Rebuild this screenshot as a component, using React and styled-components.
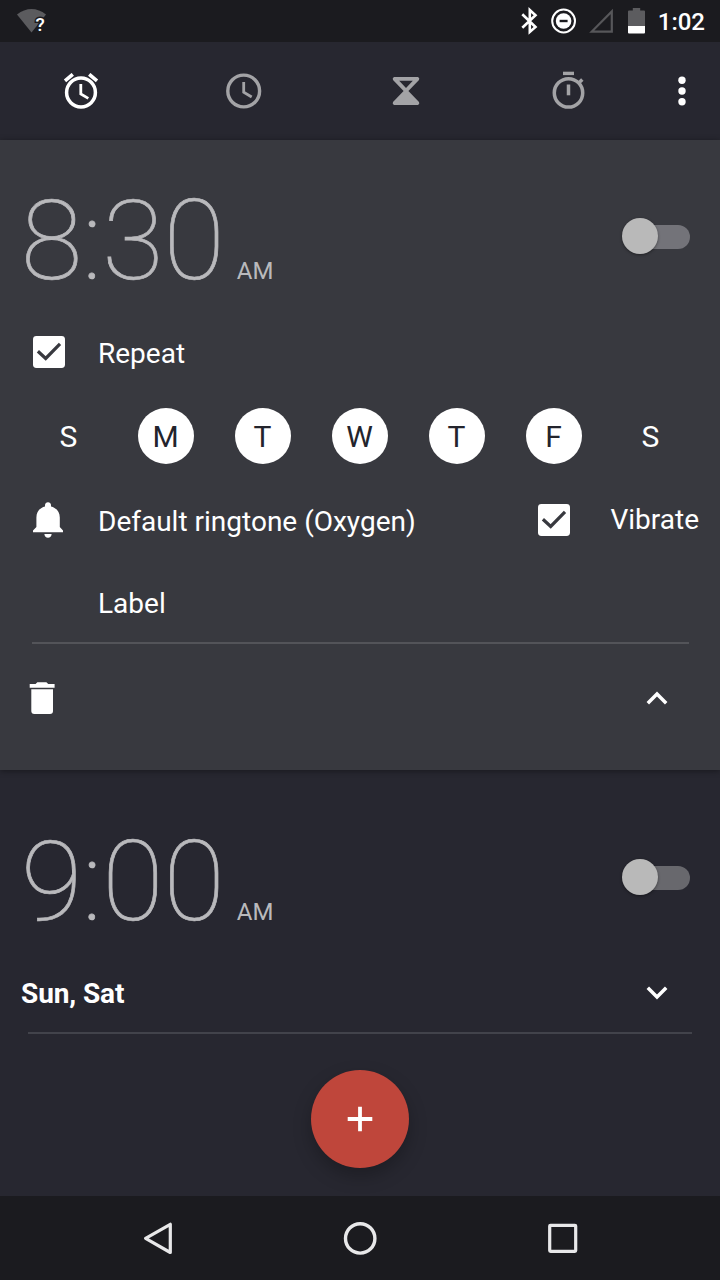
import React from 'react'
import styled, { createGlobalStyle, ThemeProvider } from 'styled-components'

const theme = {
  colors: {
    bar: '#1b1b1f',
    background: '#272730',
    expanded: '#38393f',
    time: '#b9b9bc',
    inactive: '#a3a3a6',
    accent: '#bf463b',
    dark: '#23242c'
  }
}

const GlobalStyle = createGlobalStyle`
  *,
  *::before,
  *::after {
    box-sizing: border-box;
  }

  body {
    margin: 0;
    font-family: Roboto, sans-serif;
    background-color: #272730;
    color: #fff;
  }

  svg {
    display: block;
    flex: none;
  }

  button {
    border: 0;
    padding: 0;
    background: none;
    color: inherit;
    font: inherit;
  }
`

const Screen = styled.div`
  width: 720px;
  height: 1280px;
  display: flex;
  flex-direction: column;
  overflow: hidden;
  background-color: ${props => props.theme.colors.background};
`

const StatusBar = styled.header`
  height: 42px;
  flex: none;
  padding: 0 15px 0 16px;
  display: flex;
  align-items: center;
  justify-content: space-between;
  background-color: ${props => props.theme.colors.bar};
`

const StatusIcons = styled.div`
  display: flex;
  align-items: center;
`

const Clock = styled.span`
  margin-left: 13px;
  font-size: 24px;
  line-height: 42px;
  font-weight: 500;
  padding-top: 1px;
`

const Toolbar = styled.nav`
  height: 98px;
  flex: none;
  display: flex;
`

const Tab = styled.button`
  width: 162.4px;
  display: flex;
  align-items: center;
  justify-content: center;
  color: ${props =>
    props.$active ? '#fff' : props.theme.colors.inactive};
`

const MenuButton = styled.button`
  width: 64px;
  display: flex;
  align-items: center;
  justify-content: center;
`

const AlarmCard = styled.section`
  height: 630px;
  flex: none;
  background-color: ${props => props.theme.colors.expanded};
  box-shadow: 0 1px 6px rgba(0, 0, 0, 0.4);
`

const CollapsedCard = styled.section`
  padding-top: 11px;
  flex: 1;
  display: flex;
  flex-direction: column;
`

const AlarmHeader = styled.div`
  height: 194px;
  flex: none;
  padding: 0 30px 0 21px;
  display: flex;
  align-items: center;
  justify-content: space-between;
`

const Time = styled.div`
  padding-top: 7px;
  display: flex;
  align-items: baseline;
  color: ${props => props.theme.colors.time};
  font-size: 112px;
  line-height: 132px;
  font-weight: 100;
  -webkit-text-stroke: 0.7px ${props => props.theme.colors.time};

  small {
    margin-left: 12px;
    font-size: 24px;
    line-height: 28px;
    font-weight: 400;
    -webkit-text-stroke: 0;
  }
`

const Switch = styled.div`
  width: 68px;
  height: 36px;
  margin-bottom: 2px;
  display: flex;
  align-items: center;

  &::before {
    content: '';
    width: 36px;
    height: 36px;
    flex: none;
    border-radius: 50%;
    background-color: #b9b9b9;
    box-shadow: 0 1px 3px rgba(0, 0, 0, 0.4);
    z-index: 1;
  }

  &::after {
    content: '';
    width: 50px;
    height: 24px;
    flex: none;
    margin: 2px 0 0 -18px;
    border-radius: 12px;
    background-color: ${props => (props.$raised ? '#737379' : '#68686d')};
  }
`

const OptionRow = styled.div`
  height: 36px;
  padding: 0 21px 0 33px;
  display: flex;
  align-items: center;
`

const OptionText = styled.span`
  margin-left: ${props => props.$gap}px;
  margin-top: ${props => props.$drop || 0}px;
  font-size: 28px;
  line-height: 36px;
  white-space: nowrap;
`

const CheckGroup = styled.div`
  margin-left: auto;
  display: flex;
  align-items: center;
`

const Days = styled.div`
  margin: 38px 20px;
  display: grid;
  grid-template-columns: repeat(7, 97px);
  justify-items: center;
`

const Day = styled.button`
  width: 56px;
  height: 56px;
  border-radius: 50%;
  font-size: 30px;
  line-height: 58px;
  background-color: ${props => (props.$on ? '#fff' : 'transparent')};
  color: ${props => (props.$on ? props.theme.colors.dark : '#fff')};
`

const LabelField = styled.div`
  height: 59px;
  margin: 47px 31px 0 32px;
  padding-left: 66px;
  border-bottom: 2px solid #535459;
  font-size: 28px;
  line-height: 37px;
`

const CardFooter = styled.div`
  height: 108px;
  padding: 0 52px 0 29px;
  display: flex;
  align-items: center;
  justify-content: space-between;
`

const Summary = styled.div`
  height: 59px;
  flex: none;
  margin: 0 28px;
  padding-right: 24px;
  border-bottom: 2px solid #42434b;
  display: flex;
  justify-content: space-between;

  strong {
    margin-left: -7px;
    font-size: 28px;
    line-height: 37px;
    font-weight: 700;
    letter-spacing: -0.1px;
  }

  svg {
    margin-top: 11px;
  }
`

const AddButton = styled.button`
  width: 98px;
  height: 98px;
  flex: none;
  margin: auto auto 28px;
  border-radius: 50%;
  display: flex;
  align-items: center;
  justify-content: center;
  background-color: ${props => props.theme.colors.accent};
  box-shadow: 0 8px 18px rgba(0, 0, 0, 0.25);
`

const NavBar = styled.footer`
  height: 84px;
  flex: none;
  padding: 0 142px;
  display: flex;
  align-items: center;
  justify-content: space-between;
  background-color: ${props => props.theme.colors.bar};
`

const WifiIcon = () => (
  <svg width="34" height="32" viewBox="0 0 34 32">
    <path d="M1 9.5Q8 4 15.5 4T30 9.5L15.5 27.5Z" fill="#5b5b5e" />
    <text
      x="19.5"
      y="26"
      fontSize="19"
      fontWeight="500"
      fill="#fff"
      stroke="#1b1b1f"
      strokeWidth="3"
      paintOrder="stroke"
    >
      ?
    </text>
  </svg>
)

const BluetoothIcon = () => (
  <svg width="18" height="28" viewBox="0 0 18 28" fill="none" stroke="#fff">
    <path d="M1.3 7.2L14.5 20L8.8 25V3L14.5 8.2L1.3 20.8" strokeWidth="2.6" />
  </svg>
)

const DoNotDisturbIcon = () => (
  <svg width="26" height="26" viewBox="0 0 26 26">
    <circle cx="12.6" cy="13" r="11.4" fill="none" stroke="#fff" strokeWidth="2" />
    <circle cx="12.6" cy="13" r="7.8" fill="#fff" />
    <path d="M8.6 13H16.6" stroke="#1b1b1f" strokeWidth="2.4" />
  </svg>
)

const SignalIcon = () => (
  <svg width="26" height="26" viewBox="0 0 26 26">
    <path
      d="M2.8 23.6H22.8V3.4Z"
      fill="none"
      stroke="#57575a"
      strokeWidth="2.2"
    />
  </svg>
)

const BatteryIcon = () => (
  <svg width="17" height="26" viewBox="0 0 17 26">
    <path d="M0 3.4Q0 2.4 1 2.4H4.8V0H12.2V2.4H16Q17 2.4 17 3.4V18H0Z" fill="#5c5c5f" />
    <path d="M0 18H17V24.6Q17 25.6 16 25.6H1Q0 25.6 0 24.6Z" fill="#fff" />
  </svg>
)

const AlarmIcon = () => (
  <svg width="36" height="36" viewBox="0 0 36 36" fill="none" stroke="currentColor">
    <circle cx="18" cy="19.5" r="14.4" strokeWidth="3.5" />
    <path d="M2 7.8L9.8 1.3M26.2 1.3L34 7.8" strokeWidth="3.6" />
    <path d="M17.8 11V21L25.3 25.4" strokeWidth="2.8" />
  </svg>
)

const ClockIcon = () => (
  <svg width="36" height="36" viewBox="0 0 36 36" fill="none" stroke="currentColor">
    <circle cx="17.7" cy="18" r="15.9" strokeWidth="3.4" />
    <path d="M17.7 9V19.2L25.7 24" strokeWidth="2.8" />
  </svg>
)

const TimerIcon = () => (
  <svg width="28" height="28" viewBox="0 0 28 28" fill="currentColor">
    <path
      fillRule="evenodd"
      d="M2 0H26Q28 1 27 3L16.4 14L27 25Q28 27 26 28H2Q0 27 1 25L11.6 14L1 3Q0 1 2 0ZM7.2 3.8L14 11L20.8 3.8Z"
    />
  </svg>
)

const StopwatchIcon = () => (
  <svg width="34" height="40" viewBox="0 0 34 40" fill="none" stroke="currentColor">
    <path d="M12 2.4H23" strokeWidth="3.4" />
    <circle cx="17.5" cy="21.9" r="14.2" strokeWidth="3.5" />
    <path d="M17.5 13.5V24.3" strokeWidth="3.5" />
    <path d="M27.5 12.3L31.3 8.5" strokeWidth="3.4" />
  </svg>
)

const MoreIcon = () => (
  <svg width="8" height="30" viewBox="0 0 8 30" fill="#fff">
    <circle cx="4" cy="4.3" r="3.7" />
    <circle cx="4" cy="15" r="3.7" />
    <circle cx="4" cy="25.7" r="3.7" />
  </svg>
)

const CheckIcon = () => (
  <svg width="32" height="32" viewBox="0 0 32 32">
    <rect width="32" height="32" rx="3.4" fill="#fff" />
    <path
      d="M4.9 15.2L12.7 22.4L27 7.8"
      fill="none"
      stroke="#38393f"
      strokeWidth="3.2"
    />
  </svg>
)

const BellIcon = () => (
  <svg width="30" height="36" viewBox="0 0 30 36" fill="#fff">
    <path d="M15 0.3C17 0.3 18 1.6 18 3.4V4.4C23.5 5.7 26.8 10 26.8 15.5V25L30 28.4V30.3H0V28.4L3.4 25V15.5C3.4 10 6.5 5.7 12 4.4V3.4C12 1.6 13 0.3 15 0.3Z" />
    <path d="M11.4 32H18.6C18.6 34.4 17 35.8 15 35.8S11.4 34.4 11.4 32Z" />
  </svg>
)

const TrashIcon = () => (
  <svg width="26" height="32" viewBox="0 0 26 32" fill="#fff">
    <path d="M0.7 2H6.6L8.3 0.2H17.4L19.2 2H25.6V5.7H0.7Z" />
    <path d="M2.3 7.2H24V29Q24 32 21 32H5.3Q2.3 32 2.3 29Z" />
  </svg>
)

const ChevronIcon = ({ up }) => (
  <svg width="22" height="14" viewBox="0 0 22 14" fill="none" stroke="#fff">
    <path
      d={up ? 'M1.8 12.2L11 3L20.2 12.2' : 'M1.8 1.8L11 11L20.2 1.8'}
      strokeWidth="3.5"
    />
  </svg>
)

const PlusIcon = () => (
  <svg width="26" height="26" viewBox="0 0 26 26" stroke="#fff">
    <path d="M13 0.7V25.3M0.7 13H25.3" strokeWidth="3.8" />
  </svg>
)

const BackIcon = () => (
  <svg width="34" height="34" viewBox="0 0 34 34" fill="none" stroke="#e8e8e9">
    <path d="M28.3 3.3V31.5L3.6 17.4Z" strokeWidth="3.2" strokeLinejoin="round" />
  </svg>
)

const HomeIcon = () => (
  <svg width="34" height="34" viewBox="0 0 34 34" fill="none" stroke="#e8e8e9">
    <circle cx="17.2" cy="17.4" r="14.7" strokeWidth="3.4" />
  </svg>
)

const RecentIcon = () => (
  <svg width="34" height="34" viewBox="0 0 34 34" fill="none" stroke="#e8e8e9">
    <rect x="5.7" y="4.3" width="26" height="26" rx="0.8" strokeWidth="3.2" />
  </svg>
)

const BluetoothSlot = styled.div`
  margin-right: 12px;
`

const SignalSlot = styled.div`
  margin: 0 13px 0 12px;
`

const week = [
  { day: 'S', on: false },
  { day: 'M', on: true },
  { day: 'T', on: true },
  { day: 'W', on: true },
  { day: 'T', on: true },
  { day: 'F', on: true },
  { day: 'S', on: false }
]

const App = () => {
  return (
    <ThemeProvider theme={theme}>
      <GlobalStyle />
      <Screen>
        <StatusBar>
          <WifiIcon />
          <StatusIcons>
            <BluetoothSlot>
              <BluetoothIcon />
            </BluetoothSlot>
            <DoNotDisturbIcon />
            <SignalSlot>
              <SignalIcon />
            </SignalSlot>
            <BatteryIcon />
            <Clock>1:02</Clock>
          </StatusIcons>
        </StatusBar>
        <Toolbar>
          <Tab $active>
            <AlarmIcon />
          </Tab>
          <Tab>
            <ClockIcon />
          </Tab>
          <Tab>
            <TimerIcon />
          </Tab>
          <Tab>
            <StopwatchIcon />
          </Tab>
          <MenuButton>
            <MoreIcon />
          </MenuButton>
        </Toolbar>
        <AlarmCard>
          <AlarmHeader>
            <Time>
              8:30<small>AM</small>
            </Time>
            <Switch $raised />
          </AlarmHeader>
          <OptionRow>
            <CheckIcon />
            <OptionText $gap={33} $drop={4}>
              Repeat
            </OptionText>
          </OptionRow>
          <Days>
            {week.map((item, i) => (
              <Day key={i} $on={item.on}>
                {item.day}
              </Day>
            ))}
          </Days>
          <OptionRow>
            <BellIcon />
            <OptionText $gap={35} $drop={4}>
              Default ringtone (Oxygen)
            </OptionText>
            <CheckGroup>
              <CheckIcon />
              <OptionText $gap={40}>Vibrate</OptionText>
            </CheckGroup>
          </OptionRow>
          <LabelField>Label</LabelField>
          <CardFooter>
            <TrashIcon />
            <ChevronIcon up />
          </CardFooter>
        </AlarmCard>
        <CollapsedCard>
          <AlarmHeader>
            <Time>
              9:00<small>AM</small>
            </Time>
            <Switch />
          </AlarmHeader>
          <Summary>
            <strong>Sun, Sat</strong>
            <ChevronIcon />
          </Summary>
          <AddButton>
            <PlusIcon />
          </AddButton>
        </CollapsedCard>
        <NavBar>
          <BackIcon />
          <HomeIcon />
          <RecentIcon />
        </NavBar>
      </Screen>
    </ThemeProvider>
  )
}

export default App
